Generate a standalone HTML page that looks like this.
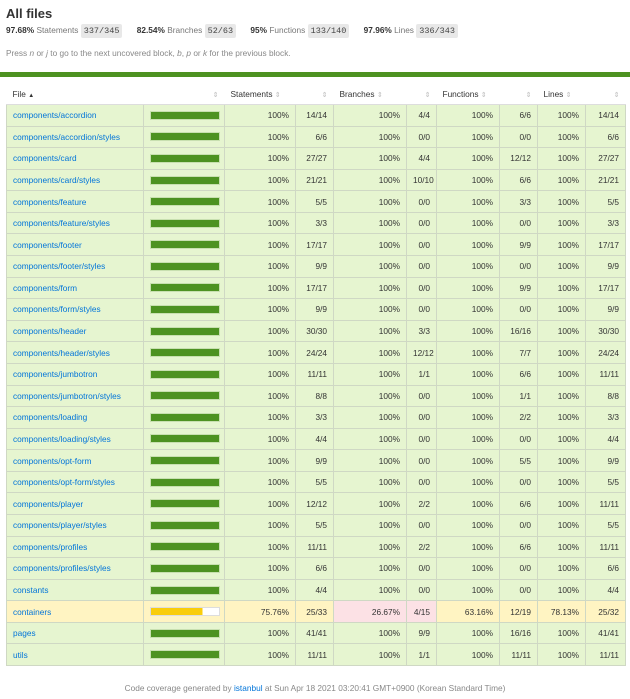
<!DOCTYPE html>
<html><head><meta charset="utf-8"><style>
body{margin:0;width:630px;height:699px;background:#fff;font-family:"Liberation Sans",sans-serif;color:#333;position:relative;overflow:hidden}
h1{position:absolute;left:6px;top:6px;margin:0;font-size:13px;font-weight:bold}
.st{position:absolute;left:6px;top:25px;font-size:8.3px;white-space:nowrap}
.st b{color:#333}.st .q{color:#777}.st .f{background:#e8e8e8;padding:2px 3px;border-radius:2px;font-family:"Liberation Mono",monospace;font-size:8.5px;color:#444;margin-right:12px}
.pr{position:absolute;left:6px;top:48px;font-size:8.3px;color:#888}
.bar{position:absolute;left:0;top:72px;width:630px;height:5px;background:#4d9221}
table{position:absolute;left:6px;top:84px;width:619px;border-collapse:collapse;table-layout:fixed;font-size:8.3px}
th{height:20px;font-weight:normal;text-align:left;padding:0 6px;color:#333;border-bottom:1px solid #ddd;position:relative}
th .s{color:#bbb;font-size:7px}
td{height:20.58px;border:1px solid #cfd8c4;padding:0 6px;text-align:right;background:#e6f5d0;white-space:nowrap}
td.n{text-align:left;color:#0074d9}
tr.y td{background:#fff4c2}tr.y td.r{background:#fce1e5}
.b{display:block;width:68px;height:7px;border:1px solid #c8e0b0;background:#4d9221;margin:0 auto}
.by{background:linear-gradient(90deg,#f9cd0b 75.8%,#fff 75.8%);border-color:#ddd}
.ft{position:absolute;top:683px;width:630px;text-align:center;font-size:8.3px;color:#888}
.ft span{color:#0074d9}
</style></head><body>
<h1>All files</h1>
<div class="st"><b>97.68%</b> <span class="q">Statements</span> <span class="f">337/345</span> <b>82.54%</b> <span class="q">Branches</span> <span class="f">52/63</span> <b>95%</b> <span class="q">Functions</span> <span class="f">133/140</span> <b>97.96%</b> <span class="q">Lines</span> <span class="f">336/343</span></div>
<div class="pr">Press <i>n</i> or <i>j</i> to go to the next uncovered block, <i>b</i>, <i>p</i> or <i>k</i> for the previous block.</div>
<div class="bar"></div>
<table>
<colgroup><col style="width:137px"><col style="width:81px"><col style="width:71px"><col style="width:38px"><col style="width:73px"><col style="width:30px"><col style="width:63px"><col style="width:38px"><col style="width:48px"><col style="width:40px"></colgroup>
<tr><th>File <span style="font-size:6px">▲</span></th><th style="text-align:right"><span class="s">⇕</span></th><th>Statements <span class="s">⇕</span></th><th style="text-align:right"><span class="s">⇕</span></th><th>Branches <span class="s">⇕</span></th><th style="text-align:right"><span class="s">⇕</span></th><th>Functions <span class="s">⇕</span></th><th style="text-align:right"><span class="s">⇕</span></th><th>Lines <span class="s">⇕</span></th><th style="text-align:right"><span class="s">⇕</span></th></tr>
<tr><td class="n">components/accordion</td><td><span class="b"></span></td><td>100%</td><td>14/14</td><td>100%</td><td>4/4</td><td>100%</td><td>6/6</td><td>100%</td><td>14/14</td></tr>
<tr><td class="n">components/accordion/styles</td><td><span class="b"></span></td><td>100%</td><td>6/6</td><td>100%</td><td>0/0</td><td>100%</td><td>0/0</td><td>100%</td><td>6/6</td></tr>
<tr><td class="n">components/card</td><td><span class="b"></span></td><td>100%</td><td>27/27</td><td>100%</td><td>4/4</td><td>100%</td><td>12/12</td><td>100%</td><td>27/27</td></tr>
<tr><td class="n">components/card/styles</td><td><span class="b"></span></td><td>100%</td><td>21/21</td><td>100%</td><td>10/10</td><td>100%</td><td>6/6</td><td>100%</td><td>21/21</td></tr>
<tr><td class="n">components/feature</td><td><span class="b"></span></td><td>100%</td><td>5/5</td><td>100%</td><td>0/0</td><td>100%</td><td>3/3</td><td>100%</td><td>5/5</td></tr>
<tr><td class="n">components/feature/styles</td><td><span class="b"></span></td><td>100%</td><td>3/3</td><td>100%</td><td>0/0</td><td>100%</td><td>0/0</td><td>100%</td><td>3/3</td></tr>
<tr><td class="n">components/footer</td><td><span class="b"></span></td><td>100%</td><td>17/17</td><td>100%</td><td>0/0</td><td>100%</td><td>9/9</td><td>100%</td><td>17/17</td></tr>
<tr><td class="n">components/footer/styles</td><td><span class="b"></span></td><td>100%</td><td>9/9</td><td>100%</td><td>0/0</td><td>100%</td><td>0/0</td><td>100%</td><td>9/9</td></tr>
<tr><td class="n">components/form</td><td><span class="b"></span></td><td>100%</td><td>17/17</td><td>100%</td><td>0/0</td><td>100%</td><td>9/9</td><td>100%</td><td>17/17</td></tr>
<tr><td class="n">components/form/styles</td><td><span class="b"></span></td><td>100%</td><td>9/9</td><td>100%</td><td>0/0</td><td>100%</td><td>0/0</td><td>100%</td><td>9/9</td></tr>
<tr><td class="n">components/header</td><td><span class="b"></span></td><td>100%</td><td>30/30</td><td>100%</td><td>3/3</td><td>100%</td><td>16/16</td><td>100%</td><td>30/30</td></tr>
<tr><td class="n">components/header/styles</td><td><span class="b"></span></td><td>100%</td><td>24/24</td><td>100%</td><td>12/12</td><td>100%</td><td>7/7</td><td>100%</td><td>24/24</td></tr>
<tr><td class="n">components/jumbotron</td><td><span class="b"></span></td><td>100%</td><td>11/11</td><td>100%</td><td>1/1</td><td>100%</td><td>6/6</td><td>100%</td><td>11/11</td></tr>
<tr><td class="n">components/jumbotron/styles</td><td><span class="b"></span></td><td>100%</td><td>8/8</td><td>100%</td><td>0/0</td><td>100%</td><td>1/1</td><td>100%</td><td>8/8</td></tr>
<tr><td class="n">components/loading</td><td><span class="b"></span></td><td>100%</td><td>3/3</td><td>100%</td><td>0/0</td><td>100%</td><td>2/2</td><td>100%</td><td>3/3</td></tr>
<tr><td class="n">components/loading/styles</td><td><span class="b"></span></td><td>100%</td><td>4/4</td><td>100%</td><td>0/0</td><td>100%</td><td>0/0</td><td>100%</td><td>4/4</td></tr>
<tr><td class="n">components/opt-form</td><td><span class="b"></span></td><td>100%</td><td>9/9</td><td>100%</td><td>0/0</td><td>100%</td><td>5/5</td><td>100%</td><td>9/9</td></tr>
<tr><td class="n">components/opt-form/styles</td><td><span class="b"></span></td><td>100%</td><td>5/5</td><td>100%</td><td>0/0</td><td>100%</td><td>0/0</td><td>100%</td><td>5/5</td></tr>
<tr><td class="n">components/player</td><td><span class="b"></span></td><td>100%</td><td>12/12</td><td>100%</td><td>2/2</td><td>100%</td><td>6/6</td><td>100%</td><td>11/11</td></tr>
<tr><td class="n">components/player/styles</td><td><span class="b"></span></td><td>100%</td><td>5/5</td><td>100%</td><td>0/0</td><td>100%</td><td>0/0</td><td>100%</td><td>5/5</td></tr>
<tr><td class="n">components/profiles</td><td><span class="b"></span></td><td>100%</td><td>11/11</td><td>100%</td><td>2/2</td><td>100%</td><td>6/6</td><td>100%</td><td>11/11</td></tr>
<tr><td class="n">components/profiles/styles</td><td><span class="b"></span></td><td>100%</td><td>6/6</td><td>100%</td><td>0/0</td><td>100%</td><td>0/0</td><td>100%</td><td>6/6</td></tr>
<tr><td class="n">constants</td><td><span class="b"></span></td><td>100%</td><td>4/4</td><td>100%</td><td>0/0</td><td>100%</td><td>0/0</td><td>100%</td><td>4/4</td></tr>
<tr class="y"><td class="n">containers</td><td><span class="b by"></span></td><td>75.76%</td><td>25/33</td><td class="r">26.67%</td><td class="r">4/15</td><td>63.16%</td><td>12/19</td><td>78.13%</td><td>25/32</td></tr>
<tr><td class="n">pages</td><td><span class="b"></span></td><td>100%</td><td>41/41</td><td>100%</td><td>9/9</td><td>100%</td><td>16/16</td><td>100%</td><td>41/41</td></tr>
<tr><td class="n">utils</td><td><span class="b"></span></td><td>100%</td><td>11/11</td><td>100%</td><td>1/1</td><td>100%</td><td>11/11</td><td>100%</td><td>11/11</td></tr>
</table>
<div class="ft">Code coverage generated by <span>istanbul</span> at Sun Apr 18 2021 03:20:41 GMT+0900 (Korean Standard Time)</div>
</body></html>
